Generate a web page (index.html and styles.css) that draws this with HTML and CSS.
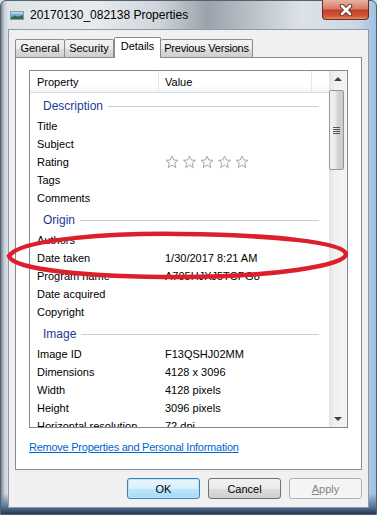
FILE: index.html
```html
<!DOCTYPE html>
<html lang="en">
<head>
    <meta charset="UTF-8">
    <title>20170130_082138 Properties</title>
    <link rel="stylesheet" href="styles.css">
</head>
<body>
    <div class="window">
        <!-- Aero title bar -->
        <div class="titlebar">
            <svg class="app-icon" width="14" height="9" viewBox="0 0 14 9">
                <defs>
                    <linearGradient id="sky" x1="0" y1="0" x2="0" y2="1">
                        <stop offset="0" stop-color="#cfe6f5"/>
                        <stop offset="0.5" stop-color="#6fa8cf"/>
                        <stop offset="1" stop-color="#23527a"/>
                    </linearGradient>
                </defs>
                <rect x="0.5" y="0.5" width="13" height="8" fill="url(#sky)" stroke="#8a9aa8"/>
                <path d="M1 7 L5 4.5 L8 6 L13 4 L13 8 L1 8 Z" fill="#2f6b4f"/>
            </svg>
            <span class="title">20170130_082138 Properties</span>
            <div class="close-btn">
                <svg width="14" height="12" viewBox="0 0 14 12">
                    <path d="M3 2 L11 10 M11 2 L3 10" stroke="#5b2a20" stroke-width="4.5" stroke-linecap="round"/>
                    <path d="M3 2 L11 10 M11 2 L3 10" stroke="#fff" stroke-width="2.6" stroke-linecap="round"/>
                </svg>
            </div>
        </div>

        <div class="client">
            <div class="tabs">
                <div class="tab tab-general">General</div>
                <div class="tab tab-security">Security</div>
                <div class="tab tab-details selected">Details</div>
                <div class="tab tab-versions">Previous Versions</div>
            </div>

            <div class="tab-page">
                <div class="listbox">
                    <div class="list">
                        <div class="list-header">
                            <div class="col col-prop">Property</div>
                            <div class="col col-value">Value</div>
                            <div class="col col-rest"></div>
                        </div>

                        <div class="group">Description</div>
                        <div class="row"><span class="prop">Title</span><span class="val"></span></div>
                        <div class="row"><span class="prop">Subject</span><span class="val"></span></div>
                        <div class="row">
                            <span class="prop">Rating</span>
                            <span class="val">
                                <svg class="stars" width="86" height="14" viewBox="0 0 86 14">
                                    <g fill="#fbfbfb" stroke="#a8a8a8" stroke-width="1" stroke-linejoin="round">
                                        <polygon points="7,1 8.8,5 13,5.3 9.8,8.1 10.8,12.6 7,10.2 3.2,12.6 4.2,8.1 1,5.3 5.2,5"/>
                                        <polygon transform="translate(17.5 0)" points="7,1 8.8,5 13,5.3 9.8,8.1 10.8,12.6 7,10.2 3.2,12.6 4.2,8.1 1,5.3 5.2,5"/>
                                        <polygon transform="translate(35 0)" points="7,1 8.8,5 13,5.3 9.8,8.1 10.8,12.6 7,10.2 3.2,12.6 4.2,8.1 1,5.3 5.2,5"/>
                                        <polygon transform="translate(52.5 0)" points="7,1 8.8,5 13,5.3 9.8,8.1 10.8,12.6 7,10.2 3.2,12.6 4.2,8.1 1,5.3 5.2,5"/>
                                        <polygon transform="translate(70 0)" points="7,1 8.8,5 13,5.3 9.8,8.1 10.8,12.6 7,10.2 3.2,12.6 4.2,8.1 1,5.3 5.2,5"/>
                                    </g>
                                </svg>
                            </span>
                        </div>
                        <div class="row"><span class="prop">Tags</span><span class="val"></span></div>
                        <div class="row"><span class="prop">Comments</span><span class="val"></span></div>

                        <div class="group">Origin</div>
                        <div class="row"><span class="prop">Authors</span><span class="val"></span></div>
                        <div class="row"><span class="prop">Date taken</span><span class="val">1/30/2017 8:21 AM</span></div>
                        <div class="row"><span class="prop">Program name</span><span class="val">A705HJXJ5TCPG8</span></div>
                        <div class="row"><span class="prop">Date acquired</span><span class="val"></span></div>
                        <div class="row"><span class="prop">Copyright</span><span class="val"></span></div>

                        <div class="group">Image</div>
                        <div class="row"><span class="prop">Image ID</span><span class="val">F13QSHJ02MM</span></div>
                        <div class="row"><span class="prop">Dimensions</span><span class="val">4128 x 3096</span></div>
                        <div class="row"><span class="prop">Width</span><span class="val">4128 pixels</span></div>
                        <div class="row"><span class="prop">Height</span><span class="val">3096 pixels</span></div>
                        <div class="row"><span class="prop">Horizontal resolution</span><span class="val">72 dpi</span></div>
                    </div>

                    <div class="scrollbar">
                        <div class="arrow arrow-up"></div>
                        <div class="thumb"><span class="grip"></span></div>
                        <div class="track"></div>
                        <div class="arrow arrow-down"></div>
                    </div>
                </div>

                <a class="remove-link" href="#">Remove Properties and Personal Information</a>
            </div>

            <div class="buttons">
                <button class="btn btn-default">OK</button>
                <button class="btn">Cancel</button>
                <button class="btn btn-disabled"><u>A</u>pply</button>
            </div>
        </div>

        <!-- hand drawn red mark over the list -->
        <svg class="mark" width="377" height="515" viewBox="0 0 377 515">
            <path d="M9 256 C 20 238, 120 233, 180 234 C 270 235, 345 242, 346 254 C 346 266, 270 277, 180 277 C 90 277, 12 270, 9 256 Z"
                  fill="none" stroke="#dd1f2b" stroke-width="4.5"/>
        </svg>
    </div>
</body>
</html>
```

FILE: styles.css
```css
/* Reset default margins and paddings */
* {
    margin: 0;
    padding: 0;
    box-sizing: border-box;
}

body {
    width: 377px;
    height: 515px;
    overflow: hidden;
    font-family: 'Liberation Sans', Arial, sans-serif;
    font-size: 11px;
    color: #000;
    background: #d6dce2;
}

/* Window frame (Aero glass look) */
.window {
    position: relative;
    width: 377px;
    height: 515px;
    display: flex;
    flex-direction: column;
    padding: 0 7px 6px 7px;
    border: 1px solid #56616c;
    border-radius: 6px 6px 0 0;
    background:
        linear-gradient(180deg, transparent 0, transparent 492px, #5d7a9c 505px, #1d3150 514px),
        linear-gradient(90deg, #7a848e 0, #c2cad2 3px, #dfe4e9 7px, #e7ebef 25%, #cfd5db 42%, #9aa3ac 55%, #b7bfc7 66%, #dde2e7 80%, #cad7e4 95%, #9ec0e2 100%);
}

.titlebar {
    height: 28px;
    display: flex;
    align-items: flex-start;
}

.app-icon {
    margin: 10px 0 0 2px;
    flex-shrink: 0;
}

.title {
    margin: 7px 0 0 6px;
    font-size: 12px;
    line-height: 14px;
}

.close-btn {
    margin: -1px 0 0 auto;
    width: 47px;
    height: 20px;
    display: flex;
    align-items: center;
    justify-content: center;
    border: 1px solid #6b2c22;
    border-top: none;
    border-radius: 0 0 4px 4px;
    background: linear-gradient(180deg, #eab3a4 0, #d97c66 45%, #c2402a 55%, #cf5a3e 85%, #e48a68 100%);
}

/* Dialog client area */
.client {
    flex: 1;
    display: flex;
    flex-direction: column;
    padding: 0 6px;
    background: #f0f0f0;
    border: 1px solid #8e9aa6;
}

.tabs {
    display: flex;
    align-items: flex-end;
    height: 20px;
    margin-top: 7px;
}

.tab {
    height: 18px;
    line-height: 17px;
    text-align: center;
    border: 1px solid #898c95;
    border-bottom: none;
    border-radius: 2px 2px 0 0;
    background: linear-gradient(180deg, #f3f3f3 0, #ebebeb 50%, #dddddd 51%, #cfcfcf 100%);
}

.tab-general { width: 50px; }
.tab-security { width: 49px; border-left: none; }
.tab-details { width: 47px; }
.tab-versions { width: 92px; border-left: none; letter-spacing: -0.2px; }

.tab.selected {
    position: relative;
    z-index: 1;
    height: 21px;
    margin-bottom: -1px;
    line-height: 16px;
    background: #fff;
}

.tab-page {
    width: 347px;
    height: 413px;
    padding: 12px 13px 0 13px;
    border: 1px solid #898c95;
    background: #fff;
}

/* Property list */
.listbox {
    display: flex;
    width: 319px;
    height: 358px;
    border: 1px solid #828790;
    overflow: hidden;
}

.list {
    flex: 1;
    overflow: hidden;
}

.list-header {
    display: flex;
    height: 22px;
    border-bottom: 1px solid #d5dfe5;
    background: linear-gradient(180deg, #fff 0, #fff 70%, #f2f3f5 100%);
}

.col {
    line-height: 23px;
    border-right: 1px solid #e2e5e9;
}

.col-prop {
    width: 129px;
    padding-left: 7px;
}

.col-value {
    width: 153px;
    padding-left: 6px;
}

.col-rest {
    flex: 1;
    border-right: none;
}

.group {
    display: flex;
    align-items: center;
    height: 24px;
    padding: 2px 10px 0 13px;
    font-size: 12px;
    color: #1e3a92;
}

.group::after {
    content: '';
    flex: 1;
    height: 1px;
    margin-left: 5px;
    background: #c5cdda;
}

.row {
    display: flex;
    height: 18px;
    line-height: 18px;
    white-space: nowrap;
}

.prop {
    width: 135px;
    padding-left: 7px;
    flex-shrink: 0;
}

.val {
    display: flex;
    align-items: center;
}

.stars {
    display: block;
}

/* Scrollbar */
.scrollbar {
    width: 18px;
    display: flex;
    flex-direction: column;
    background: linear-gradient(90deg, #e3e3e3 0, #f0f0f0 30%, #f4f4f4 100%);
}

.arrow {
    height: 17px;
    position: relative;
}

.arrow::after {
    content: '';
    position: absolute;
    left: 5px;
    width: 0;
    height: 0;
    border-left: 4px solid transparent;
    border-right: 4px solid transparent;
}

.arrow-up::after {
    top: 6px;
    border-bottom: 4px solid #404040;
}

.arrow-down::after {
    top: 7px;
    border-top: 4px solid #404040;
}

.thumb {
    height: 80px;
    margin: 2px 3px 0 0;
    display: flex;
    align-items: center;
    justify-content: center;
    border: 1px solid #979797;
    border-radius: 2px;
    background: linear-gradient(90deg, #f3f3f3 0, #e8e8e8 45%, #d6d6d6 55%, #cacaca 100%);
}

.grip {
    width: 7px;
    height: 7px;
    background: repeating-linear-gradient(180deg, #555 0, #555 1px, transparent 1px, transparent 2px);
}

.track {
    flex: 1;
}

.remove-link {
    display: block;
    margin-top: 12px;
    line-height: 14px;
    letter-spacing: -0.25px;
    color: #0066cc;
}

/* Dialog buttons */
.buttons {
    display: flex;
    justify-content: flex-end;
    gap: 8px;
    margin-top: 8px;
}

.btn {
    width: 73px;
    height: 21px;
    font-family: inherit;
    font-size: 11px;
    color: #000;
    border: 1px solid #707070;
    border-radius: 3px;
    background: linear-gradient(180deg, #f2f2f2 0, #ebebeb 50%, #dddddd 51%, #cfcfcf 100%);
}

.btn-default {
    border-color: #3c7fb1;
    box-shadow: inset 0 0 0 1px #bfe6f8;
    background: linear-gradient(180deg, #eaf6fd 0, #d9f0fc 50%, #bee6fd 51%, #a7d9f5 100%);
}

.btn-disabled {
    color: #838383;
    border-color: #adb2b5;
    background: #f4f4f4;
}

.mark {
    position: absolute;
    top: -1px;
    left: -1px;
    pointer-events: none;
}
```
